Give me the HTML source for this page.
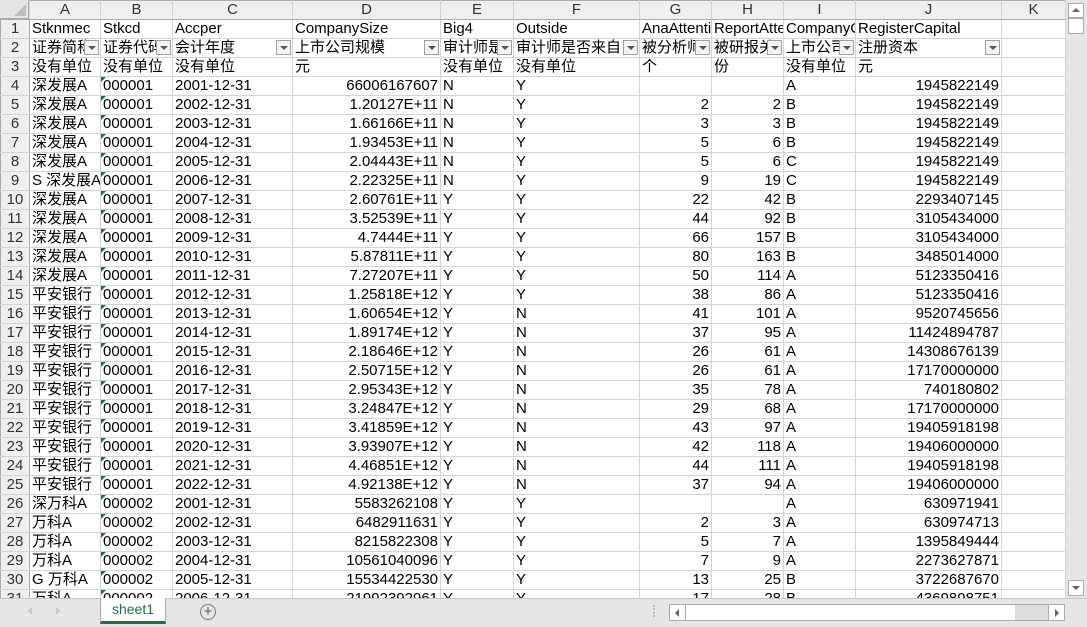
<!DOCTYPE html><html><head><meta charset="utf-8"><style>
body{margin:0;width:1087px;height:626px;overflow:hidden;background:#fff;font-family:"Liberation Sans","Noto Sans CJK SC",sans-serif;position:relative}
#g{position:absolute;left:0;top:0;width:1066px;height:598px;overflow:hidden}
table{border-collapse:collapse;table-layout:fixed;font-size:15px;color:#000;width:1065px}
td{height:18px;padding:0 2px;border:1px solid #d4d4d4;white-space:nowrap;overflow:hidden;line-height:18px;position:relative}
tr.h td{background:#efefef;color:#333;text-align:center;border-color:#ababab #d4d4d4 #ababab #d4d4d4}
td.r{background:#efefef;color:#333;text-align:center;padding:0;border-color:#d4d4d4 #ababab}
td.n{text-align:right}
.dd{position:absolute;right:1px;top:1px;width:15px;height:15px;border:1px solid #a0a0a0;background:#f3f3f3;box-sizing:border-box}
.dd:after{content:"";position:absolute;left:3px;top:5px;border-left:4px solid transparent;border-right:4px solid transparent;border-top:4px solid #555}
.t:before{content:"";position:absolute;left:0;top:0;border-top:5px solid #217346;border-right:5px solid transparent}
#b{position:absolute;left:0;top:598px;width:1087px;height:28px;background:#e6e6e6;border-top:1px solid #c6c6c6}
</style></head><body>
<div id="g"><table>
<colgroup><col style="width:29px"><col style="width:71px"><col style="width:72px"><col style="width:120px"><col style="width:148px"><col style="width:73px"><col style="width:126px"><col style="width:72px"><col style="width:72px"><col style="width:72px"><col style="width:146px"><col style="width:64px"></colgroup>
<tr class="h"><td style="background:#e6e6e6"></td><td>A</td><td>B</td><td>C</td><td>D</td><td>E</td><td>F</td><td>G</td><td>H</td><td>I</td><td>J</td><td>K</td></tr>
<tr><td class="r">1</td><td>Stknmec</td><td>Stkcd</td><td>Accper</td><td>CompanySize</td><td>Big4</td><td>Outside</td><td>AnaAttention</td><td>ReportAttention</td><td>CompanyCate</td><td>RegisterCapital</td><td></td></tr>
<tr><td class="r">2</td><td>证券简称<span class="dd"></span></td><td>证券代码<span class="dd"></span></td><td>会计年度<span class="dd"></span></td><td>上市公司规模<span class="dd"></span></td><td>审计师是<span class="dd"></span></td><td>审计师是否来自<span class="dd"></span></td><td>被分析师<span class="dd"></span></td><td>被研报关<span class="dd"></span></td><td>上市公司<span class="dd"></span></td><td>注册资本<span class="dd"></span></td><td></td></tr>
<tr><td class="r">3</td><td>没有单位</td><td>没有单位</td><td>没有单位</td><td>元</td><td>没有单位</td><td>没有单位</td><td>个</td><td>份</td><td>没有单位</td><td>元</td><td></td></tr>
<tr><td class="r">4</td><td>深发展A</td><td class="t">000001</td><td>2001-12-31</td><td class="n">66006167607</td><td>N</td><td>Y</td><td></td><td></td><td>A</td><td class="n">1945822149</td><td></td></tr>
<tr><td class="r">5</td><td>深发展A</td><td class="t">000001</td><td>2002-12-31</td><td class="n">1.20127E+11</td><td>N</td><td>Y</td><td class="n">2</td><td class="n">2</td><td>B</td><td class="n">1945822149</td><td></td></tr>
<tr><td class="r">6</td><td>深发展A</td><td class="t">000001</td><td>2003-12-31</td><td class="n">1.66166E+11</td><td>N</td><td>Y</td><td class="n">3</td><td class="n">3</td><td>B</td><td class="n">1945822149</td><td></td></tr>
<tr><td class="r">7</td><td>深发展A</td><td class="t">000001</td><td>2004-12-31</td><td class="n">1.93453E+11</td><td>N</td><td>Y</td><td class="n">5</td><td class="n">6</td><td>B</td><td class="n">1945822149</td><td></td></tr>
<tr><td class="r">8</td><td>深发展A</td><td class="t">000001</td><td>2005-12-31</td><td class="n">2.04443E+11</td><td>N</td><td>Y</td><td class="n">5</td><td class="n">6</td><td>C</td><td class="n">1945822149</td><td></td></tr>
<tr><td class="r">9</td><td>S 深发展A</td><td class="t">000001</td><td>2006-12-31</td><td class="n">2.22325E+11</td><td>N</td><td>Y</td><td class="n">9</td><td class="n">19</td><td>C</td><td class="n">1945822149</td><td></td></tr>
<tr><td class="r">10</td><td>深发展A</td><td class="t">000001</td><td>2007-12-31</td><td class="n">2.60761E+11</td><td>Y</td><td>Y</td><td class="n">22</td><td class="n">42</td><td>B</td><td class="n">2293407145</td><td></td></tr>
<tr><td class="r">11</td><td>深发展A</td><td class="t">000001</td><td>2008-12-31</td><td class="n">3.52539E+11</td><td>Y</td><td>Y</td><td class="n">44</td><td class="n">92</td><td>B</td><td class="n">3105434000</td><td></td></tr>
<tr><td class="r">12</td><td>深发展A</td><td class="t">000001</td><td>2009-12-31</td><td class="n">4.7444E+11</td><td>Y</td><td>Y</td><td class="n">66</td><td class="n">157</td><td>B</td><td class="n">3105434000</td><td></td></tr>
<tr><td class="r">13</td><td>深发展A</td><td class="t">000001</td><td>2010-12-31</td><td class="n">5.87811E+11</td><td>Y</td><td>Y</td><td class="n">80</td><td class="n">163</td><td>B</td><td class="n">3485014000</td><td></td></tr>
<tr><td class="r">14</td><td>深发展A</td><td class="t">000001</td><td>2011-12-31</td><td class="n">7.27207E+11</td><td>Y</td><td>Y</td><td class="n">50</td><td class="n">114</td><td>A</td><td class="n">5123350416</td><td></td></tr>
<tr><td class="r">15</td><td>平安银行</td><td class="t">000001</td><td>2012-12-31</td><td class="n">1.25818E+12</td><td>Y</td><td>Y</td><td class="n">38</td><td class="n">86</td><td>A</td><td class="n">5123350416</td><td></td></tr>
<tr><td class="r">16</td><td>平安银行</td><td class="t">000001</td><td>2013-12-31</td><td class="n">1.60654E+12</td><td>Y</td><td>N</td><td class="n">41</td><td class="n">101</td><td>A</td><td class="n">9520745656</td><td></td></tr>
<tr><td class="r">17</td><td>平安银行</td><td class="t">000001</td><td>2014-12-31</td><td class="n">1.89174E+12</td><td>Y</td><td>N</td><td class="n">37</td><td class="n">95</td><td>A</td><td class="n">11424894787</td><td></td></tr>
<tr><td class="r">18</td><td>平安银行</td><td class="t">000001</td><td>2015-12-31</td><td class="n">2.18646E+12</td><td>Y</td><td>N</td><td class="n">26</td><td class="n">61</td><td>A</td><td class="n">14308676139</td><td></td></tr>
<tr><td class="r">19</td><td>平安银行</td><td class="t">000001</td><td>2016-12-31</td><td class="n">2.50715E+12</td><td>Y</td><td>N</td><td class="n">26</td><td class="n">61</td><td>A</td><td class="n">17170000000</td><td></td></tr>
<tr><td class="r">20</td><td>平安银行</td><td class="t">000001</td><td>2017-12-31</td><td class="n">2.95343E+12</td><td>Y</td><td>N</td><td class="n">35</td><td class="n">78</td><td>A</td><td class="n">740180802</td><td></td></tr>
<tr><td class="r">21</td><td>平安银行</td><td class="t">000001</td><td>2018-12-31</td><td class="n">3.24847E+12</td><td>Y</td><td>N</td><td class="n">29</td><td class="n">68</td><td>A</td><td class="n">17170000000</td><td></td></tr>
<tr><td class="r">22</td><td>平安银行</td><td class="t">000001</td><td>2019-12-31</td><td class="n">3.41859E+12</td><td>Y</td><td>N</td><td class="n">43</td><td class="n">97</td><td>A</td><td class="n">19405918198</td><td></td></tr>
<tr><td class="r">23</td><td>平安银行</td><td class="t">000001</td><td>2020-12-31</td><td class="n">3.93907E+12</td><td>Y</td><td>N</td><td class="n">42</td><td class="n">118</td><td>A</td><td class="n">19406000000</td><td></td></tr>
<tr><td class="r">24</td><td>平安银行</td><td class="t">000001</td><td>2021-12-31</td><td class="n">4.46851E+12</td><td>Y</td><td>N</td><td class="n">44</td><td class="n">111</td><td>A</td><td class="n">19405918198</td><td></td></tr>
<tr><td class="r">25</td><td>平安银行</td><td class="t">000001</td><td>2022-12-31</td><td class="n">4.92138E+12</td><td>Y</td><td>N</td><td class="n">37</td><td class="n">94</td><td>A</td><td class="n">19406000000</td><td></td></tr>
<tr><td class="r">26</td><td>深万科A</td><td class="t">000002</td><td>2001-12-31</td><td class="n">5583262108</td><td>Y</td><td>Y</td><td></td><td></td><td>A</td><td class="n">630971941</td><td></td></tr>
<tr><td class="r">27</td><td>万科A</td><td class="t">000002</td><td>2002-12-31</td><td class="n">6482911631</td><td>Y</td><td>Y</td><td class="n">2</td><td class="n">3</td><td>A</td><td class="n">630974713</td><td></td></tr>
<tr><td class="r">28</td><td>万科A</td><td class="t">000002</td><td>2003-12-31</td><td class="n">8215822308</td><td>Y</td><td>Y</td><td class="n">5</td><td class="n">7</td><td>A</td><td class="n">1395849444</td><td></td></tr>
<tr><td class="r">29</td><td>万科A</td><td class="t">000002</td><td>2004-12-31</td><td class="n">10561040096</td><td>Y</td><td>Y</td><td class="n">7</td><td class="n">9</td><td>A</td><td class="n">2273627871</td><td></td></tr>
<tr><td class="r">30</td><td>G 万科A</td><td class="t">000002</td><td>2005-12-31</td><td class="n">15534422530</td><td>Y</td><td>Y</td><td class="n">13</td><td class="n">25</td><td>B</td><td class="n">3722687670</td><td></td></tr>
<tr><td class="r">31</td><td>万科A</td><td class="t">000002</td><td>2006-12-31</td><td class="n">21992392961</td><td>Y</td><td>Y</td><td class="n">17</td><td class="n">28</td><td>B</td><td class="n">4369898751</td><td></td></tr>
</table></div>
<div style="position:absolute;left:0;top:0;width:29px;height:19px;background:#e6e6e6;border-right:1px solid #ababab;border-bottom:1px solid #ababab;box-sizing:border-box"><div style="position:absolute;right:2px;bottom:2px;border-left:12px solid transparent;border-bottom:12px solid #c0c0c0"></div></div>
<div style="position:absolute;left:1066px;top:0;width:21px;height:598px;background:#e6e6e6">
<div style="position:absolute;left:2px;top:3px;width:16px;height:15px;background:#fff;border:1px solid #ababab;box-sizing:border-box"><div style="position:absolute;left:3px;top:4px;border-left:4px solid transparent;border-right:4px solid transparent;border-bottom:4px solid #666"></div></div>
<div style="position:absolute;left:2px;top:18px;width:16px;height:16px;background:#fff;border:1px solid #ababab;box-sizing:border-box"></div>
<div style="position:absolute;left:2px;top:580px;width:16px;height:16px;background:#fff;border:1px solid #ababab;box-sizing:border-box"><div style="position:absolute;left:3px;top:5px;border-left:4px solid transparent;border-right:4px solid transparent;border-top:4px solid #666"></div></div>
</div>
<div id="b">
<div style="position:absolute;left:28px;top:8px;border-top:4px solid transparent;border-bottom:4px solid transparent;border-right:4px solid #c8c8c8"></div>
<div style="position:absolute;left:56px;top:8px;border-top:4px solid transparent;border-bottom:4px solid transparent;border-left:4px solid #c8c8c8"></div>
<div style="position:absolute;left:100px;top:-1px;width:66px;height:26px;background:#fff;border:1px solid #ababab;border-top:none;border-bottom:3px solid #217346;box-sizing:border-box;text-align:center;color:#217346;font-size:14px;line-height:22px">sheet1</div>
<div style="position:absolute;left:200px;top:5px;width:14px;height:14px;border:1px solid #777;border-radius:50%;text-align:center;line-height:14px;font-size:15px;color:#555">+</div>
<div style="position:absolute;left:653px;top:6px;width:2px;height:12px;border-left:2px dotted #bbb"></div>
<div style="position:absolute;left:669px;top:5px;width:396px;height:17px;background:#fff;border:1px solid #ababab;box-sizing:border-box">
<div style="position:absolute;left:0;top:0;width:15px;height:15px;border-right:1px solid #ababab"><div style="position:absolute;left:5px;top:4px;border-top:4px solid transparent;border-bottom:4px solid transparent;border-right:4px solid #666"></div></div>
<div style="position:absolute;left:345px;top:0;width:33px;height:15px;background:#dcdcdc"></div>
<div style="position:absolute;right:0;top:0;width:15px;height:15px;border-left:1px solid #ababab"><div style="position:absolute;left:6px;top:4px;border-top:4px solid transparent;border-bottom:4px solid transparent;border-left:4px solid #666"></div></div>
</div>
</div>
</body></html>
